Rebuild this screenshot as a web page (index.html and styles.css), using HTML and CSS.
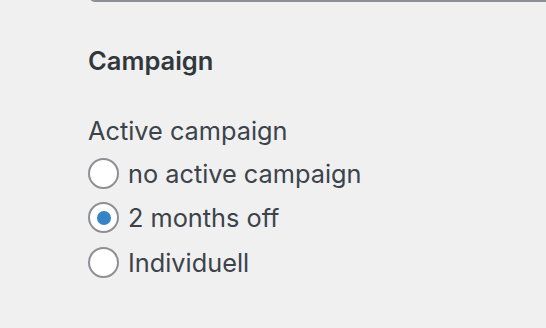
FILE: index.html
```html
<!DOCTYPE html>
<html lang="en">
<head>
    <meta charset="UTF-8">
    <meta name="viewport" content="width=device-width, initial-scale=1.0">
    <title>Campaign Settings</title>
    <link rel="stylesheet" href="styles.css">
</head>
<body>
    <main class="settings">
        <!-- Previous field (only its bottom edge is visible) -->
        <input type="text" class="prev-field" aria-label="Previous field">

        <h2>Campaign</h2>

        <fieldset class="campaign-options">
            <legend>Active campaign</legend>
            <label class="radio-row">
                <input type="radio" name="campaign" value="none">
                <span>no active campaign</span>
            </label>
            <label class="radio-row">
                <input type="radio" name="campaign" value="2-months-off" checked>
                <span>2 months off</span>
            </label>
            <label class="radio-row">
                <input type="radio" name="campaign" value="individual">
                <span>Individuell</span>
            </label>
        </fieldset>
    </main>
</body>
</html>
```

FILE: styles.css
```css
/* Global Styles */
body {
    font-family: 'Inter', 'Noto Sans', sans-serif;
    margin: 0;
    padding: 0;
    background-color: #f0f0f1;
    color: #3c434a;
}

.settings {
    padding: 0 0 0 89px;
}

/* Bottom edge of the field above */
.prev-field {
    display: block;
    box-sizing: border-box;
    width: 480px;
    height: 40px;
    margin: -38px 0 0 0;
    border: 2px solid #8c8f94;
    border-radius: 6px;
    background: #fff;
}

.settings h2 {
    font-size: 25.5px;
    font-weight: 600;
    color: #32373c;
    margin: 44px 0 0 -1px;
    line-height: 30px;
}

/* Radio group */
.campaign-options {
    border: none;
    margin: 40px 0 0 0;
    padding: 0;
}

.campaign-options legend {
    font-size: 25.3px;
    line-height: 30px;
    padding: 0;
    margin-left: -1px;
}

.radio-row {
    display: flex;
    align-items: center;
    gap: 9px;
    font-size: 25.3px;
    height: 44.5px;
}

.radio-row:first-of-type {
    margin-top: 5px;
}

.radio-row input[type="radio"] {
    appearance: none;
    -webkit-appearance: none;
    box-sizing: border-box;
    width: 31px;
    height: 31px;
    margin: 0 0 0 -1px;
    border: 2px solid #8c8f94;
    border-radius: 50%;
    background: #fff;
    display: flex;
    align-items: center;
    justify-content: center;
}

.radio-row input[type="radio"]:checked::before {
    content: "";
    width: 14px;
    height: 14px;
    border-radius: 50%;
    background-color: #3582c4;
}
```
